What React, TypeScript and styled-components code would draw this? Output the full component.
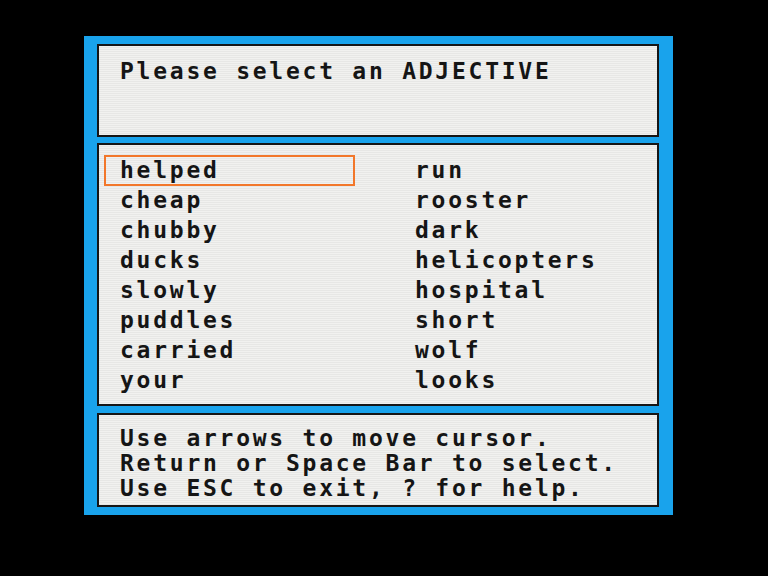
import styled, { createGlobalStyle } from 'styled-components';

const GlobalStyle = createGlobalStyle`
  html, body {
    margin: 0;
    padding: 0;
    background: #000;
  }
  body {
    width: 768px;
    height: 576px;
    overflow: hidden;
  }
`;

const leftWords = ['helped', 'cheap', 'chubby', 'ducks', 'slowly', 'puddles', 'carried', 'your'];
const rightWords = ['run', 'rooster', 'dark', 'helicopters', 'hospital', 'short', 'wolf', 'looks'];

const App = () => {
  const selected = 0;
  return (
    <>
      <GlobalStyle />
      <Screen>
        <Frame>
          <PromptPanel>
            <Line>Please select an ADJECTIVE</Line>
          </PromptPanel>
          <ListPanel>
            <WordGrid>
              {[...leftWords, ...rightWords].map((w, i) => (
                <Word key={w} $active={i === selected}>
                  {w}
                </Word>
              ))}
            </WordGrid>
          </ListPanel>
          <HelpPanel>
            <HelpLine>Use arrows to move cursor.</HelpLine>
            <HelpLine>Return or Space Bar to select.</HelpLine>
            <HelpLine>Use ESC to exit, ? for help.</HelpLine>
          </HelpPanel>
        </Frame>
      </Screen>
    </>
  );
};

const Screen = styled.div`
  width: 768px;
  height: 576px;
  background: #000;
  padding: 36px 0 0 84px;
  box-sizing: border-box;
`;

const Frame = styled.div`
  width: 589px;
  height: 479px;
  box-sizing: border-box;
  background: #19a3ec;
  padding: 8px 14px 8px 13px;
  display: flex;
  flex-direction: column;
`;

const Panel = styled.div`
  box-sizing: border-box;
  border: 2px solid #161616;
  background: repeating-linear-gradient(
    to bottom,
    #f1f1ef 0px,
    #f1f1ef 1px,
    #e7e7e5 1px,
    #e7e7e5 2px
  );
  font-family: 'DejaVu Sans Mono', 'Liberation Mono', monospace;
  font-weight: bold;
  font-size: 23px;
  letter-spacing: 2.75px;
  color: #151515;
  white-space: pre;
`;

const PromptPanel = styled(Panel)`
  height: 93px;
  padding: 12px 0 0 21px;
`;

const Line = styled.div`
  line-height: 26px;
`;

const ListPanel = styled(Panel)`
  height: 263px;
  margin-top: 6px;
  padding: 10px 0 0 5px;
`;

const WordGrid = styled.div`
  display: grid;
  grid-template-columns: 295px 1fr;
  grid-template-rows: repeat(8, 30px);
  grid-auto-flow: column;
`;

const Word = styled.div<{ $active?: boolean }>`
  box-sizing: border-box;
  width: 251px;
  height: 31px;
  border: 2px solid ${(p) => (p.$active ? '#f2772a' : 'transparent')};
  padding-left: 14px;
  line-height: 26px;
`;

const HelpPanel = styled(Panel)`
  height: 94px;
  margin-top: 7px;
  padding: 11px 0 0 21px;
`;

const HelpLine = styled.div`
  line-height: 25px;
`;

export default App;
